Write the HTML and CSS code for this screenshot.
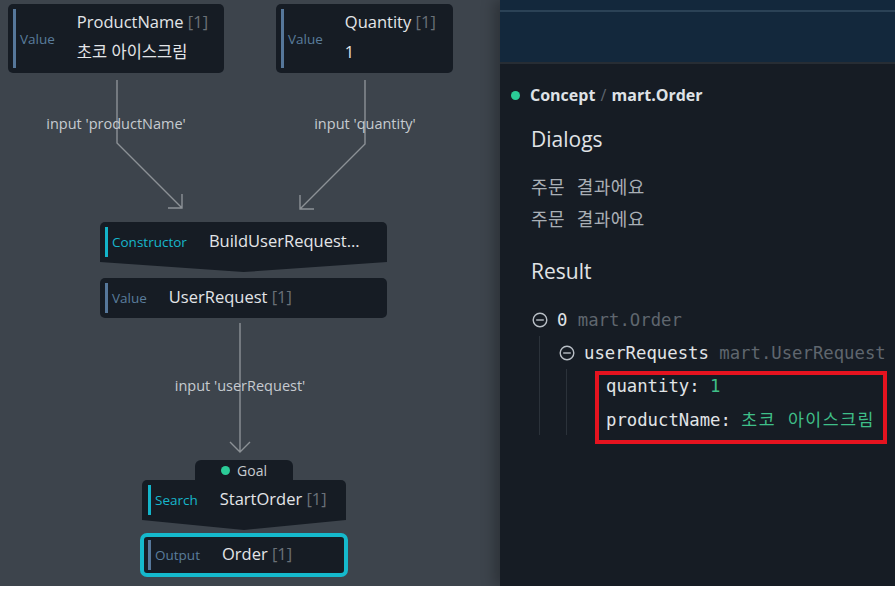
FILE: index.html
```html
<!DOCTYPE html>
<html lang="ko">
<head>
    <meta charset="UTF-8">
    <meta name="viewport" content="width=device-width, initial-scale=1.0">
    <title>mart.Order</title>
    <link rel="stylesheet" href="styles.css">
</head>
<body>
    <div class="app">
        <div class="canvas">
            <svg class="edges" width="500" height="586" viewBox="0 0 500 586">
                <path d="M117 80 V143 L182 208 M168 208 H182 V194" />
                <path d="M365 80 V144 L300 209 M314 209 H300 V195" />
                <path d="M240 323 V452 M230 442 L240 452 L250 442" />
            </svg>

            <div class="edge-label label-product">input 'productName'</div>
            <div class="edge-label label-quantity">input 'quantity'</div>
            <div class="edge-label label-request">input 'userRequest'</div>

            <div class="node node-product">
                <div class="node-inner">
                    <span class="kind">Value</span>
                    <div class="name-block">
                        <div class="name">ProductName <span class="count">[1]</span></div>
                        <div class="name value">초코 아이스크림</div>
                    </div>
                </div>
            </div>

            <div class="node node-quantity">
                <div class="node-inner">
                    <span class="kind">Value</span>
                    <div class="name-block">
                        <div class="name">Quantity <span class="count">[1]</span></div>
                        <div class="name value">1</div>
                    </div>
                </div>
            </div>

            <div class="node node-ctor pointed">
                <div class="node-inner accent">
                    <span class="kind">Constructor</span>
                    <span class="name">BuildUserRequest…</span>
                </div>
            </div>

            <div class="node node-request">
                <div class="node-inner">
                    <span class="kind">Value</span>
                    <span class="name">UserRequest <span class="count">[1]</span></span>
                </div>
            </div>

            <div class="goal-tab"><span class="dot"></span>Goal</div>

            <div class="node node-search pointed">
                <div class="node-inner accent">
                    <span class="kind">Search</span>
                    <span class="name">StartOrder <span class="count">[1]</span></span>
                </div>
            </div>

            <div class="node node-output">
                <div class="node-inner">
                    <span class="kind">Output</span>
                    <span class="name">Order <span class="count">[1]</span></span>
                </div>
            </div>
        </div>

        <div class="panel">
            <div class="panel-top">
                <div class="toolbar-line"></div>
            </div>
            <div class="panel-body">
                <div class="crumb">
                    <span class="dot"></span>
                    <span class="crumb-text">Concept <span class="slash">/</span> mart.Order</span>
                </div>

                <div class="section">
                    <h2>Dialogs</h2>
                    <div class="dialog first">주문 결과에요</div>
                    <div class="dialog">주문 결과에요</div>
                </div>

                <div class="section">
                    <h2 class="result-title">Result</h2>
                </div>

                <div class="tree">
                    <div class="tree-row">
                        <svg class="toggle" width="16" height="16" viewBox="0 0 16 16">
                            <circle cx="8" cy="8" r="6.8" />
                            <path d="M4.2 8 H11.8" />
                        </svg>
                        <span class="row-text"><span class="key">0</span> <span class="type">mart.Order</span></span>
                    </div>
                    <div class="tree-children">
                        <div class="tree-row">
                            <svg class="toggle" width="16" height="16" viewBox="0 0 16 16">
                                <circle cx="8" cy="8" r="6.8" />
                                <path d="M4.2 8 H11.8" />
                            </svg>
                            <span class="row-text"><span class="key">userRequests</span> <span class="type">mart.UserRequest</span></span>
                        </div>
                        <div class="tree-children leaf">
                            <div class="highlight">
                                <div class="tree-row"><span class="row-text"><span class="key">quantity:</span> <span class="val">1</span></span></div>
                                <div class="tree-row"><span class="row-text"><span class="key">productName:</span> <span class="val ko">초코 아이스크림</span></span></div>
                            </div>
                        </div>
                    </div>
                </div>
            </div>
        </div>
    </div>
</body>
</html>
```

FILE: styles.css
```css
body {
    margin: 0;
    background-color: #ffffff;
    font-family: "Open Sans", "Noto Sans CJK KR", sans-serif;
}

.app {
    display: flex;
    height: 586px;
    overflow: hidden;
}

/* diagram canvas */

.canvas {
    position: relative;
    width: 500px;
    flex-shrink: 0;
    background-color: #3d444c;
}

.edges {
    position: absolute;
    left: 0;
    top: 0;
}

.edges path {
    fill: none;
    stroke: #8c9196;
    stroke-width: 1.4;
}

.edge-label {
    position: absolute;
    font-size: 14.5px;
    color: #c6cbd0;
    transform: translateX(-50%);
    white-space: nowrap;
}

.label-product { left: 116px; top: 114px; }
.label-quantity { left: 365px; top: 114px; }
.label-request { left: 240px; top: 376px; }

.node {
    position: absolute;
    box-sizing: border-box;
    padding: 5px;
    background-color: #161c24;
    border-radius: 5px;
}

.node-inner {
    display: flex;
    align-items: center;
    gap: 22px;
    height: 100%;
    padding-left: 4px;
    border-left: 3px solid #56779a;
}

.kind {
    font-size: 13.5px;
    color: #5a7d9c;
}

.node-inner.accent {
    border-left-color: #13b5ca;
}

.node-inner.accent .kind {
    color: #17b6cb;
}

.name {
    font-size: 16.5px;
    font-weight: 500;
    line-height: 22px;
    margin-bottom: 2px;
    color: #e3e5e8;
    white-space: nowrap;
}

.name-block {
    margin-bottom: 4px;
}

.name-block .name {
    line-height: 30px;
    margin-bottom: 0;
}

.name.value {
    font-weight: 400;
}

.count {
    font-weight: 400;
    color: #6a7077;
}

.node-product { left: 8px; top: 4px; width: 216px; height: 69px; }
.node-quantity { left: 276px; top: 4px; width: 177px; height: 69px; }
.node-ctor { left: 100px; top: 222px; width: 287px; height: 40px; }
.node-request { left: 100px; top: 278px; width: 287px; height: 40px; }
.node-search { left: 142px; top: 480px; width: 204px; height: 40px; padding-left: 6px; }

.node-output {
    left: 140px;
    top: 533px;
    width: 208px;
    height: 44px;
    padding: 3px 4px;
    border: 4px solid #15b9cc;
    border-radius: 7px;
}

.pointed {
    border-radius: 5px 5px 0 0;
}

.pointed::after {
    content: "";
    position: absolute;
    left: 0;
    right: 0;
    top: 100%;
    height: 10px;
    background-color: #161c24;
    clip-path: polygon(0 0, 100% 0, 50% 100%);
}

.goal-tab {
    position: absolute;
    left: 195px;
    top: 460px;
    width: 98px;
    height: 21px;
    display: flex;
    align-items: center;
    justify-content: center;
    gap: 7px;
    background-color: #161c24;
    border-radius: 6px 6px 0 0;
    font-size: 14px;
    color: #c6cbd0;
}

.dot {
    flex-shrink: 0;
    width: 9px;
    height: 9px;
    border-radius: 50%;
    background-color: #2bcb97;
}

/* side panel */

.panel {
    flex: 1;
    display: flex;
    flex-direction: column;
    background-color: #161c24;
    box-shadow: -6px 0 12px rgba(0, 0, 0, 0.25);
    z-index: 1;
    overflow: hidden;
}

.panel-top {
    flex-shrink: 0;
    height: 64px;
    padding-top: 10px;
    box-sizing: border-box;
    background-color: #13283c;
    border-bottom: 2px solid #272d34;
}

.toolbar-line {
    height: 2px;
    background-color: #2b4256;
}

.crumb {
    display: flex;
    align-items: center;
    gap: 10px;
    margin: 20px 0 0 11px;
    height: 22px;
    font-size: 16px;
    font-weight: 700;
    color: #dfe2e6;
}

.crumb .slash {
    margin: 0 1px;
    font-weight: 400;
    color: #5e656d;
}

.section {
    padding-left: 31px;
}

h2 {
    margin: 19px 0 0;
    font-size: 21px;
    font-weight: 500;
    line-height: 28px;
    color: #e0e3e6;
}

.dialog {
    font-family: "Noto Sans CJK KR", sans-serif;
    font-size: 18px;
    line-height: 32px;
    letter-spacing: 0.5px;
    word-spacing: 6px;
    color: #a9afb6;
}

.dialog.first {
    margin-top: 17px;
}

.result-title {
    margin-top: 23px;
}

/* result tree */

.tree {
    margin-top: 18px;
    padding-left: 32px;
    font-family: "DejaVu Sans Mono", "Noto Sans CJK KR", monospace;
    font-size: 17.3px;
}

.tree-row {
    display: flex;
    align-items: center;
    height: 33px;
}

.row-text {
    white-space: nowrap;
}

.toggle {
    flex-shrink: 0;
    margin-right: 9px;
}

.toggle circle,
.toggle path {
    fill: none;
    stroke: #b9bfc6;
    stroke-width: 1.4;
}

.key {
    color: #e1e4e7;
}

.type {
    color: #5f666e;
}

.val {
    color: #3fbf88;
}

.val.ko {
    letter-spacing: 1.5px;
}

.tree-children {
    margin-left: 7px;
    padding-left: 19px;
    border-left: 1px solid #2b323a;
}

.tree-children.leaf {
    padding-left: 39px;
}

.highlight {
    position: relative;
}

.highlight::after {
    content: "";
    position: absolute;
    left: -11px;
    right: 8px;
    top: 2px;
    bottom: -9px;
    border: 4px solid #e5131f;
}
```
